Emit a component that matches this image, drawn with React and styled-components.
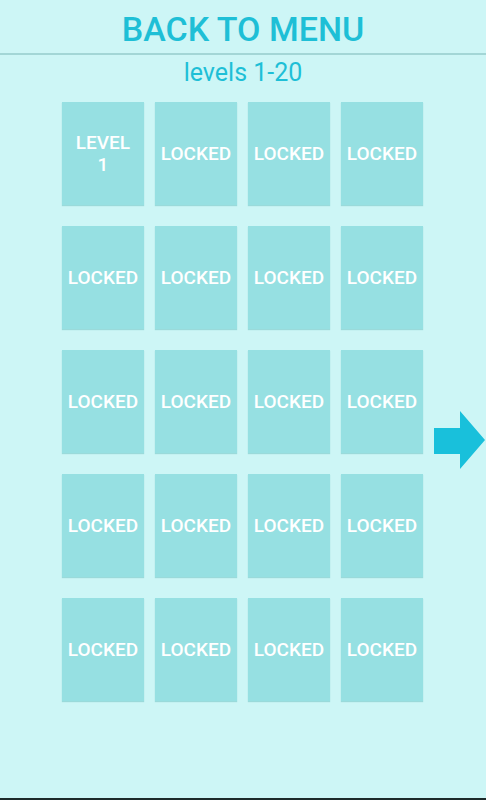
import * as React from 'react';
import styled, { createGlobalStyle } from 'styled-components';

const GlobalStyle = createGlobalStyle`
  html, body {
    margin: 0;
    padding: 0;
    background: #cdf6f6;
  }
  body {
    font-family: Roboto, 'Noto Sans', sans-serif;
  }
`;

const Screen = styled.div`
  position: relative;
  width: 486px;
  height: 800px;
  background: #cdf6f6;
  display: flex;
  flex-direction: column;
  box-sizing: border-box;
  border-bottom: 2px solid #1c2a2a;
`;

const Header = styled.div`
  height: 53px;
  display: flex;
  align-items: center;
  justify-content: center;
  border-bottom: 2px solid #a3d6d6;
`;

const HeaderTitle = styled.h1`
  margin: 0;
  padding-top: 4px;
  font-size: 34px;
  font-weight: 500;
  color: #1ebfd6;
`;

const SubTitle = styled.div`
  text-align: center;
  font-size: 25px;
  color: #1ebfd6;
  margin-top: 2px;
  line-height: 32px;
`;

const Body = styled.div`
  display: flex;
  margin-top: 13px;
`;

const Grid = styled.div`
  margin-left: 62px;
  display: grid;
  grid-template-columns: repeat(4, 82px);
  grid-auto-rows: 103px;
  column-gap: 11px;
  row-gap: 21px;
`;

const Tile = styled.div`
  background: #96e0e2;
  box-shadow: 0 1px 1px rgba(120, 200, 200, 0.6);
  display: flex;
  align-items: center;
  justify-content: center;
  text-align: center;
  color: #ffffff;
  font-size: 19px;
  font-weight: 500;
  line-height: 22px;
  padding: 0 1px;
`;

const ArrowButton = styled.div`
  margin-left: 11px;
  margin-top: 309px;
  width: 52px;
  height: 60px;
`;

const Arrow = () => (
  <svg width="52" height="60" viewBox="0 0 52 60">
    <polygon points="0,17 26,17 26,0 51,29 26,58 26,43 0,43" fill="#19c0db" />
  </svg>
);

const tiles = Array.from({ length: 20 }, (_, i) => i);

const App = () => (
  <Screen>
    <GlobalStyle />
    <Header>
      <HeaderTitle>BACK TO MENU</HeaderTitle>
    </Header>
    <SubTitle>levels 1-20</SubTitle>
    <Body>
      <Grid>
        {tiles.map(i =>
          i === 0 ? (
            <Tile key={i}>
              LEVEL
              <br />1
            </Tile>
          ) : (
            <Tile key={i}>LOCKED</Tile>
          )
        )}
      </Grid>
      <ArrowButton>
        <Arrow />
      </ArrowButton>
    </Body>
  </Screen>
);

export default App;
